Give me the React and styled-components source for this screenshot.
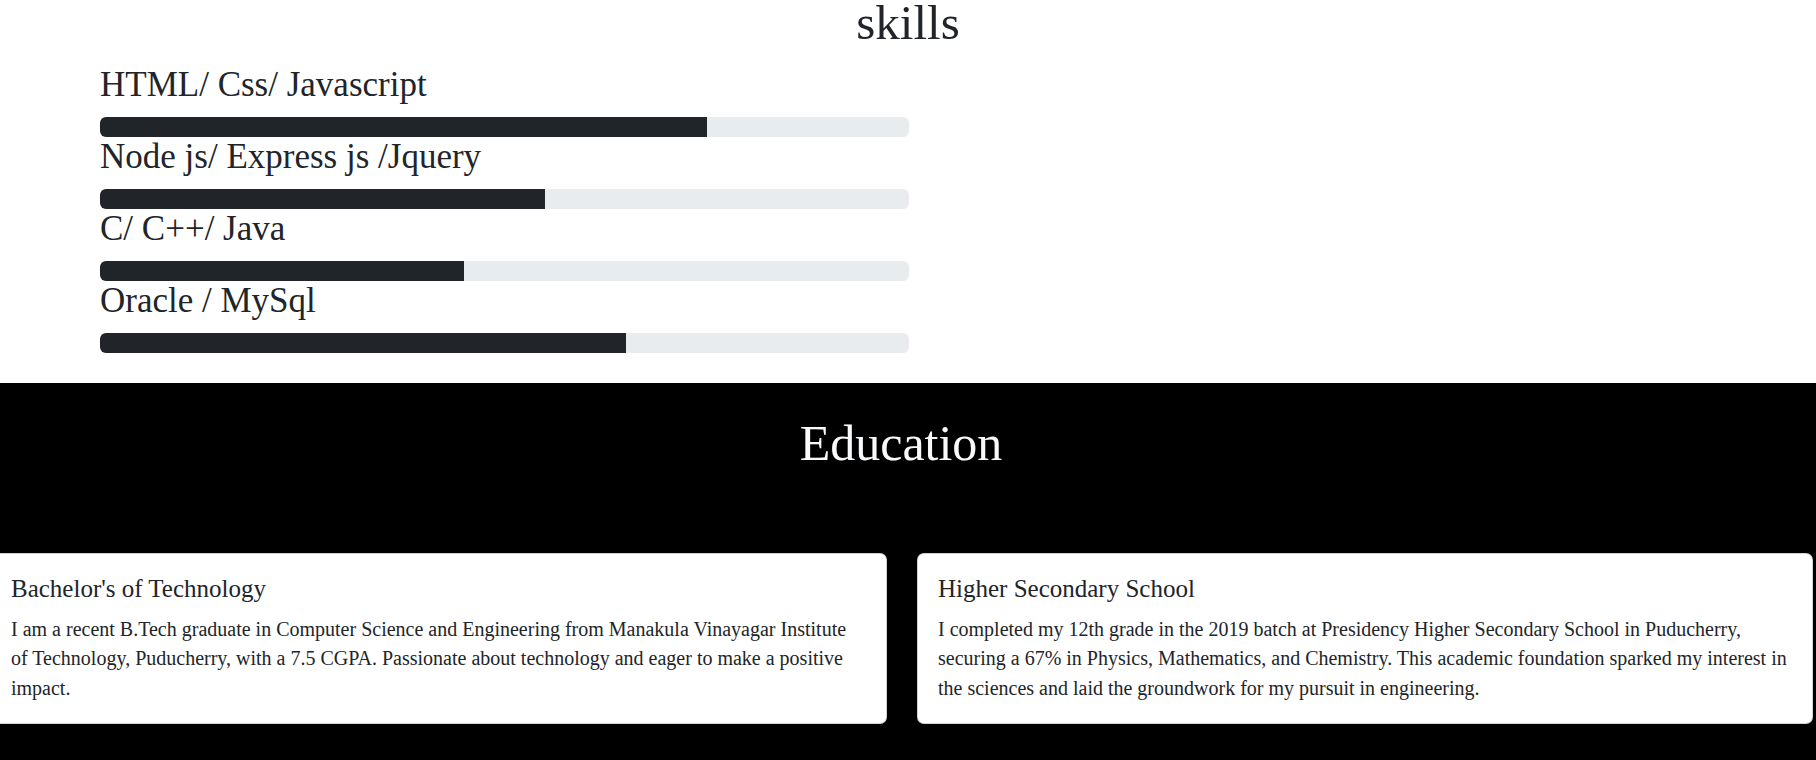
import React from "react";
import styled, { createGlobalStyle } from "styled-components";

const Global = createGlobalStyle`
  html, body { margin: 0; padding: 0; overflow: hidden; }
  body {
    font-family: "Liberation Serif", "Times New Roman", serif;
    color: #212529;
    background: #fff;
  }
  * { box-sizing: border-box; }
`;

const Page = styled.div`
  width: 1816px;
  height: 760px;
  display: flex;
  flex-direction: column;
`;

const SkillsSection = styled.section`
  padding: 0 0 30px 0;
`;

const SkillsTitle = styled.h1`
  margin: 0 0 19px 0;
  font-weight: 400;
  font-size: 49px;
  line-height: 46px;
  text-align: center;
`;

const SkillList = styled.div`
  margin-left: 100px;
  width: 809px;
  display: flex;
  flex-direction: column;
`;

const SkillLabel = styled.h3`
  margin: 0 0 13px 0;
  font-weight: 400;
  font-size: 35px;
  line-height: 39px;
`;

const Track = styled.div`
  height: 20px;
  border-radius: 6px;
  background: #e9ecef;
  overflow: hidden;
  display: flex;
`;

const Fill = styled.div`
  height: 100%;
  background: #212529;
`;

const EduSection = styled.section`
  flex: 1;
  background: #000;
  padding-top: 30px;
`;

const EduTitle = styled.h2`
  margin: 0 0 80px 0;
  padding-right: 14px;
  font-weight: 400;
  font-size: 50px;
  line-height: 60px;
  color: #f8f9fa;
  text-align: center;
`;

const CardRow = styled.div`
  display: grid;
  grid-template-columns: 897px 896px;
  column-gap: 30px;
  margin-left: -10px;
`;

const Card = styled.div`
  background: #fff;
  border: 1px solid rgba(0, 0, 0, 0.175);
  border-radius: 7px;
  padding: 20px;
`;

const CardTitle = styled.h5`
  margin: 0 0 11px 0;
  font-weight: 400;
  font-size: 25px;
  line-height: 30px;
  color: #212529;
`;

const CardText = styled.p`
  margin: 0;
  font-size: 20px;
  line-height: 29.4px;
  color: #212529;
`;

const skills = [
  { name: "HTML/ Css/ Javascript", value: 75 },
  { name: "Node js/ Express js /Jquery", value: 55 },
  { name: "C/ C++/ Java", value: 45 },
  { name: "Oracle / MySql", value: 65 },
];

const education = [
  {
    title: "Bachelor's of Technology",
    text: "I am a recent B.Tech graduate in Computer Science and Engineering from Manakula Vinayagar Institute of Technology, Puducherry, with a 7.5 CGPA. Passionate about technology and eager to make a positive impact.",
  },
  {
    title: "Higher Secondary School",
    text: "I completed my 12th grade in the 2019 batch at Presidency Higher Secondary School in Puducherry, securing a 67% in Physics, Mathematics, and Chemistry. This academic foundation sparked my interest in the sciences and laid the groundwork for my pursuit in engineering.",
  },
];

export default function App() {
  return (
    <>
      <Global />
      <Page>
        <SkillsSection>
          <SkillsTitle>skills</SkillsTitle>
          <SkillList>
            {skills.map((s) => (
              <div key={s.name}>
                <SkillLabel>{s.name}</SkillLabel>
                <Track>
                  <Fill style={{ width: `${s.value}%` }} />
                </Track>
              </div>
            ))}
          </SkillList>
        </SkillsSection>
        <EduSection>
          <EduTitle>Education</EduTitle>
          <CardRow>
            {education.map((e) => (
              <Card key={e.title}>
                <CardTitle>{e.title}</CardTitle>
                <CardText>{e.text}</CardText>
              </Card>
            ))}
          </CardRow>
        </EduSection>
      </Page>
    </>
  );
}
